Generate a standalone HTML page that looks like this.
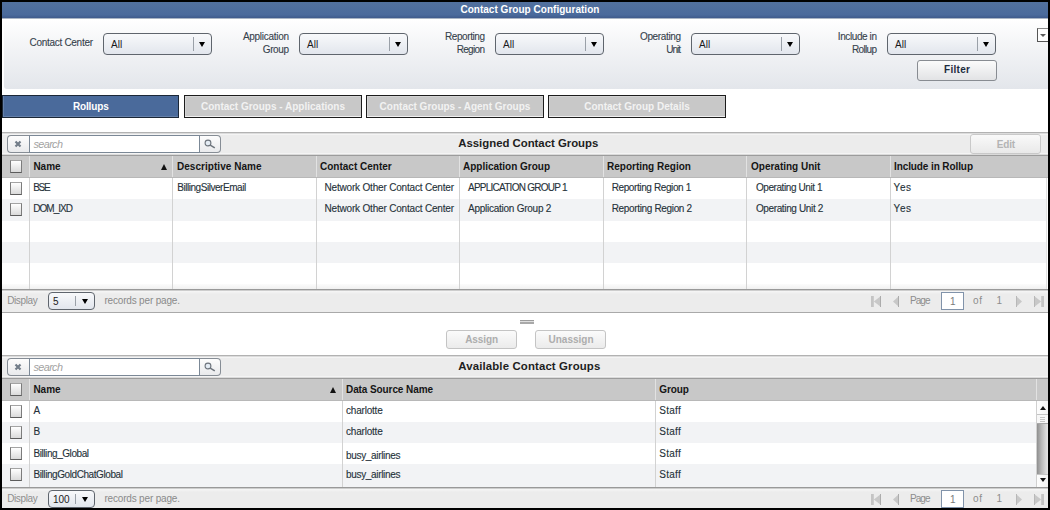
<!DOCTYPE html>
<html><head><meta charset="utf-8"><style>
html,body{margin:0;padding:0;width:1050px;height:510px;overflow:hidden;background:#000;font-family:'Liberation Sans', sans-serif;}
</style></head><body>
<div style="position:absolute;left:2px;top:2px;width:1046px;height:506px;background:#fff"></div>
<div style="position:absolute;left:2px;top:2px;width:1046px;height:16px;background:linear-gradient(#52719e,#4a6a9c 80%,#3f5b8c)"></div>
<div style="position:absolute;left:2px;top:18px;width:1046px;height:1px;background:#a9b4c4"></div>
<div style="position:absolute;left:4px;top:19px;width:1044px;height:70px;background:linear-gradient(#ffffff 0%,#f3f4f6 40%,#e3e6eb 100%);border-bottom-left-radius:3px"></div>
<div style="position:absolute;left:103px;top:33px;width:107px;height:20px;border:1px solid #5f656d;border-radius:4px;background:linear-gradient(#f8f9fb,#e2e6ed)"></div>
<div style="position:absolute;left:193px;top:37px;width:1px;height:14px;background:#9aa0a8"></div>
<div style="position:absolute;left:198.5px;top:42px;width:0;height:0;border-left:3.5px solid transparent;border-right:3.5px solid transparent;border-top:5px solid #000"></div>
<div style="position:absolute;left:299px;top:33px;width:107px;height:20px;border:1px solid #5f656d;border-radius:4px;background:linear-gradient(#f8f9fb,#e2e6ed)"></div>
<div style="position:absolute;left:389px;top:37px;width:1px;height:14px;background:#9aa0a8"></div>
<div style="position:absolute;left:394.5px;top:42px;width:0;height:0;border-left:3.5px solid transparent;border-right:3.5px solid transparent;border-top:5px solid #000"></div>
<div style="position:absolute;left:495px;top:33px;width:107px;height:20px;border:1px solid #5f656d;border-radius:4px;background:linear-gradient(#f8f9fb,#e2e6ed)"></div>
<div style="position:absolute;left:585px;top:37px;width:1px;height:14px;background:#9aa0a8"></div>
<div style="position:absolute;left:590.5px;top:42px;width:0;height:0;border-left:3.5px solid transparent;border-right:3.5px solid transparent;border-top:5px solid #000"></div>
<div style="position:absolute;left:691px;top:33px;width:107px;height:20px;border:1px solid #5f656d;border-radius:4px;background:linear-gradient(#f8f9fb,#e2e6ed)"></div>
<div style="position:absolute;left:781px;top:37px;width:1px;height:14px;background:#9aa0a8"></div>
<div style="position:absolute;left:786.5px;top:42px;width:0;height:0;border-left:3.5px solid transparent;border-right:3.5px solid transparent;border-top:5px solid #000"></div>
<div style="position:absolute;left:887px;top:33px;width:107px;height:20px;border:1px solid #5f656d;border-radius:4px;background:linear-gradient(#f8f9fb,#e2e6ed)"></div>
<div style="position:absolute;left:977px;top:37px;width:1px;height:14px;background:#9aa0a8"></div>
<div style="position:absolute;left:982.5px;top:42px;width:0;height:0;border-left:3.5px solid transparent;border-right:3.5px solid transparent;border-top:5px solid #000"></div>
<div style="position:absolute;left:1037px;top:28px;width:10px;height:12px;border:1px solid #555;border-top-color:#8a8a8a;border-right:none;background:#fdfdfd"></div>
<div style="position:absolute;left:1040px;top:34px;width:0;height:0;border-left:3.5px solid transparent;border-right:3.5px solid transparent;border-top:3.5px solid #5a5a5a"></div>
<div style="position:absolute;left:917px;top:60px;width:78px;height:19px;border:1px solid #888c92;border-radius:3px;background:linear-gradient(#fbfbfb,#e2e3e5)"></div>
<div style="position:absolute;left:2px;top:95px;width:175px;height:21px;background:#4a6a9b;border:1px solid #1b2737;box-shadow:inset 1px -1px 0 #6480aa"></div>
<div style="position:absolute;left:184px;top:95px;width:176px;height:21px;background:#c8c8c8;border:1px solid #1c1c1c;box-shadow:inset 0 -1px 0 #f0f0f0,inset 1px 1px 0 #d4d4d4"></div>
<div style="position:absolute;left:366px;top:95px;width:176px;height:21px;background:#c8c8c8;border:1px solid #1c1c1c;box-shadow:inset 0 -1px 0 #f0f0f0,inset 1px 1px 0 #d4d4d4"></div>
<div style="position:absolute;left:548px;top:95px;width:176px;height:21px;background:#c8c8c8;border:1px solid #1c1c1c;box-shadow:inset 0 -1px 0 #f0f0f0,inset 1px 1px 0 #d4d4d4"></div>
<div style="position:absolute;left:2px;top:132px;width:1046px;height:1px;background:#b2b2b2"></div>
<div style="position:absolute;left:2px;top:133px;width:1046px;height:22px;background:linear-gradient(#dcdcdc 0,#dcdcdc 1px,#f4f4f4 1px,#f4f4f4 2px,#ececec 2px,#ececec 20px,#f4f4f4 20px,#f4f4f4 21px,#dadada 21px)"></div>
<div style="position:absolute;left:7px;top:135px;width:21px;height:16px;border:1px solid #868d95;border-right:none;border-radius:4px 0 0 4px;background:linear-gradient(#fdfdfd,#e9eaec)"></div>
<svg style="position:absolute;left:14px;top:140px" width="8" height="8" viewBox="0 0 8 8"><path d="M1.5 1.5L6.5 6.5M6.5 1.5L1.5 6.5" stroke="#727d89" stroke-width="2.2"/></svg>
<div style="position:absolute;left:29px;top:135px;width:169px;height:16px;border:1px solid #7b8896;background:#fff"></div>
<div style="position:absolute;left:200px;top:135px;width:20px;height:16px;border:1px solid #868d95;border-left:none;border-radius:0 4px 4px 0;background:linear-gradient(#fdfdfd,#e9eaec)"></div>
<svg style="position:absolute;left:203px;top:138px" width="14" height="12" viewBox="0 0 14 12"><circle cx="5" cy="5" r="2.9" fill="#e4ecf4" stroke="#6c737b" stroke-width="1.1"/><line x1="7.2" y1="7.2" x2="11.8" y2="9.8" stroke="#6c737b" stroke-width="1.5"/></svg>
<div style="position:absolute;left:970px;top:134px;width:69px;height:18px;border:1px solid #c9c9c9;border-radius:3px;background:linear-gradient(#f9f9f9,#e9e9e9)"></div>
<div style="position:absolute;left:2px;top:155px;width:1046px;height:1px;background:#9c9c9c"></div>
<div style="position:absolute;left:2px;top:156px;width:1046px;height:22px;background:#c8c8c8"></div>
<div style="position:absolute;left:10px;top:160px;width:10px;height:11px;border:1px solid #7c7c7c;border-top-color:#a4a4a4;border-bottom-color:#5c5c5c;background:linear-gradient(#ffffff,#dadada)"></div>
<div style="position:absolute;left:29px;top:156px;width:1px;height:21px;background:#e2e2e2"></div>
<div style="position:absolute;left:172px;top:156px;width:1px;height:21px;background:#e2e2e2"></div>
<div style="position:absolute;left:316px;top:156px;width:1px;height:21px;background:#e2e2e2"></div>
<div style="position:absolute;left:459px;top:156px;width:1px;height:21px;background:#e2e2e2"></div>
<div style="position:absolute;left:603px;top:156px;width:1px;height:21px;background:#e2e2e2"></div>
<div style="position:absolute;left:746px;top:156px;width:1px;height:21px;background:#e2e2e2"></div>
<div style="position:absolute;left:890px;top:156px;width:1px;height:21px;background:#e2e2e2"></div>
<div style="position:absolute;left:2px;top:177px;width:1046px;height:1px;background:#b8b8b8"></div>
<div style="position:absolute;left:160.5px;top:164px;width:0;height:0;border-left:3px solid transparent;border-right:3px solid transparent;border-bottom:6px solid #111"></div>
<div style="position:absolute;left:2px;top:178px;width:1046px;height:21px;background:#ffffff"></div>
<div style="position:absolute;left:2px;top:199px;width:1046px;height:22px;background:#f2f3f5"></div>
<div style="position:absolute;left:2px;top:221px;width:1046px;height:21px;background:#ffffff"></div>
<div style="position:absolute;left:2px;top:242px;width:1046px;height:21px;background:#f2f3f5"></div>
<div style="position:absolute;left:2px;top:263px;width:1046px;height:26px;background:#ffffff"></div>
<div style="position:absolute;left:2px;top:284px;width:1046px;height:5px;background:linear-gradient(#fcfcfc,#f0f0f0)"></div>
<div style="position:absolute;left:29px;top:178px;width:1px;height:111px;background:#d2d2d2"></div>
<div style="position:absolute;left:172px;top:178px;width:1px;height:111px;background:#d2d2d2"></div>
<div style="position:absolute;left:316px;top:178px;width:1px;height:111px;background:#d2d2d2"></div>
<div style="position:absolute;left:459px;top:178px;width:1px;height:111px;background:#d2d2d2"></div>
<div style="position:absolute;left:603px;top:178px;width:1px;height:111px;background:#d2d2d2"></div>
<div style="position:absolute;left:746px;top:178px;width:1px;height:111px;background:#d2d2d2"></div>
<div style="position:absolute;left:890px;top:178px;width:1px;height:111px;background:#d2d2d2"></div>
<div style="position:absolute;left:1046px;top:178px;width:2px;height:111px;background:#fff;border-left:1px solid #e2e2e2"></div>
<div style="position:absolute;left:10px;top:182px;width:10px;height:11px;border:1px solid #7c7c7c;border-top-color:#a4a4a4;border-bottom-color:#5c5c5c;background:linear-gradient(#ffffff,#dadada)"></div>
<div style="position:absolute;left:10px;top:203px;width:10px;height:11px;border:1px solid #7c7c7c;border-top-color:#a4a4a4;border-bottom-color:#5c5c5c;background:linear-gradient(#ffffff,#dadada)"></div>
<div style="position:absolute;left:2px;top:289px;width:1046px;height:1px;background:#999999"></div>
<div style="position:absolute;left:2px;top:290px;width:1046px;height:1px;background:#cdcdcd"></div>
<div style="position:absolute;left:2px;top:291px;width:1046px;height:21px;background:linear-gradient(#f6f6f6,#ececec 3px,#ececec)"></div>
<div style="position:absolute;left:2px;top:312px;width:1046px;height:1px;background:#a9a9a9"></div>
<div style="position:absolute;left:48px;top:292px;width:45px;height:16px;border:1px solid #5f656d;border-radius:4px;background:linear-gradient(#f8f9fb,#e2e6ed)"></div>
<div style="position:absolute;left:75px;top:296px;width:1px;height:10px;background:#9aa0a8"></div>
<div style="position:absolute;left:81.5px;top:299px;width:0;height:0;border-left:3.5px solid transparent;border-right:3.5px solid transparent;border-top:5px solid #000"></div>
<svg style="position:absolute;left:870px;top:296px" width="12" height="11" viewBox="0 0 12 11"><rect x="1" y="0" width="2.8" height="11" fill="#c4c4c4"/><polygon points="11,0 11,11 3.8,5.5" fill="#c8c8c8"/><rect x="10" y="0" width="1" height="11" fill="#acacac"/></svg>
<svg style="position:absolute;left:892px;top:296px" width="8" height="11" viewBox="0 0 8 11"><polygon points="7,0 7,11 1,5.5" fill="#c8c8c8"/><rect x="6" y="0" width="1" height="11" fill="#acacac"/></svg>
<div style="position:absolute;left:941px;top:292px;width:21px;height:16px;border:1px solid #8193aa;background:#fff"></div>
<svg style="position:absolute;left:1015px;top:296px" width="8" height="11" viewBox="0 0 8 11"><polygon points="1,0 1,11 7,5.5" fill="#c8c8c8"/><rect x="1" y="0" width="1" height="11" fill="#b8b8b8"/></svg>
<svg style="position:absolute;left:1033px;top:296px" width="12" height="11" viewBox="0 0 12 11"><polygon points="1,0 1,11 8.2,5.5" fill="#c8c8c8"/><rect x="1" y="0" width="1" height="11" fill="#b8b8b8"/><rect x="8.2" y="0" width="2.8" height="11" fill="#c4c4c4"/></svg>
<div style="position:absolute;left:520px;top:320px;width:14px;height:1px;background:#9c9c9c"></div>
<div style="position:absolute;left:520px;top:321px;width:14px;height:1px;background:#dedede"></div>
<div style="position:absolute;left:520px;top:322px;width:14px;height:2px;background:#a9a9a9"></div>
<div style="position:absolute;left:446px;top:330px;width:69px;height:17px;border:1px solid #c4c4c4;border-radius:3px;background:linear-gradient(#fbfbfb,#ebebeb)"></div>
<div style="position:absolute;left:535px;top:330px;width:69px;height:17px;border:1px solid #c4c4c4;border-radius:3px;background:linear-gradient(#fbfbfb,#ebebeb)"></div>
<div style="position:absolute;left:2px;top:355px;width:1046px;height:1px;background:#b2b2b2"></div>
<div style="position:absolute;left:2px;top:356px;width:1046px;height:22px;background:linear-gradient(#dcdcdc 0,#dcdcdc 1px,#f4f4f4 1px,#f4f4f4 2px,#ececec 2px,#ececec 20px,#f4f4f4 20px,#f4f4f4 21px,#dadada 21px)"></div>
<div style="position:absolute;left:7px;top:358px;width:21px;height:16px;border:1px solid #868d95;border-right:none;border-radius:4px 0 0 4px;background:linear-gradient(#fdfdfd,#e9eaec)"></div>
<svg style="position:absolute;left:14px;top:363px" width="8" height="8" viewBox="0 0 8 8"><path d="M1.5 1.5L6.5 6.5M6.5 1.5L1.5 6.5" stroke="#727d89" stroke-width="2.2"/></svg>
<div style="position:absolute;left:29px;top:358px;width:169px;height:16px;border:1px solid #7b8896;background:#fff"></div>
<div style="position:absolute;left:200px;top:358px;width:20px;height:16px;border:1px solid #868d95;border-left:none;border-radius:0 4px 4px 0;background:linear-gradient(#fdfdfd,#e9eaec)"></div>
<svg style="position:absolute;left:203px;top:361px" width="14" height="12" viewBox="0 0 14 12"><circle cx="5" cy="5" r="2.9" fill="#e4ecf4" stroke="#6c737b" stroke-width="1.1"/><line x1="7.2" y1="7.2" x2="11.8" y2="9.8" stroke="#6c737b" stroke-width="1.5"/></svg>
<div style="position:absolute;left:2px;top:378px;width:1046px;height:1px;background:#9c9c9c"></div>
<div style="position:absolute;left:2px;top:379px;width:1046px;height:22px;background:#c8c8c8"></div>
<div style="position:absolute;left:10px;top:383px;width:10px;height:11px;border:1px solid #7c7c7c;border-top-color:#a4a4a4;border-bottom-color:#5c5c5c;background:linear-gradient(#ffffff,#dadada)"></div>
<div style="position:absolute;left:29px;top:379px;width:1px;height:21px;background:#e2e2e2"></div>
<div style="position:absolute;left:342px;top:379px;width:1px;height:21px;background:#e2e2e2"></div>
<div style="position:absolute;left:655px;top:379px;width:1px;height:21px;background:#e2e2e2"></div>
<div style="position:absolute;left:1036px;top:379px;width:1px;height:21px;background:#e2e2e2"></div>
<div style="position:absolute;left:2px;top:400px;width:1046px;height:1px;background:#b8b8b8"></div>
<div style="position:absolute;left:329.5px;top:387px;width:0;height:0;border-left:3px solid transparent;border-right:3px solid transparent;border-bottom:6px solid #111"></div>
<div style="position:absolute;left:2px;top:401px;width:1034px;height:21px;background:#ffffff"></div>
<div style="position:absolute;left:2px;top:422px;width:1034px;height:21px;background:#f2f3f5"></div>
<div style="position:absolute;left:2px;top:443px;width:1034px;height:21px;background:#ffffff"></div>
<div style="position:absolute;left:2px;top:464px;width:1034px;height:23px;background:#f2f3f5"></div>
<div style="position:absolute;left:29px;top:401px;width:1px;height:86px;background:#d2d2d2"></div>
<div style="position:absolute;left:342px;top:401px;width:1px;height:86px;background:#d2d2d2"></div>
<div style="position:absolute;left:655px;top:401px;width:1px;height:86px;background:#d2d2d2"></div>
<div style="position:absolute;left:10px;top:405px;width:10px;height:11px;border:1px solid #7c7c7c;border-top-color:#a4a4a4;border-bottom-color:#5c5c5c;background:linear-gradient(#ffffff,#dadada)"></div>
<div style="position:absolute;left:10px;top:426px;width:10px;height:11px;border:1px solid #7c7c7c;border-top-color:#a4a4a4;border-bottom-color:#5c5c5c;background:linear-gradient(#ffffff,#dadada)"></div>
<div style="position:absolute;left:10px;top:447px;width:10px;height:11px;border:1px solid #7c7c7c;border-top-color:#a4a4a4;border-bottom-color:#5c5c5c;background:linear-gradient(#ffffff,#dadada)"></div>
<div style="position:absolute;left:10px;top:468px;width:10px;height:11px;border:1px solid #7c7c7c;border-top-color:#a4a4a4;border-bottom-color:#5c5c5c;background:linear-gradient(#ffffff,#dadada)"></div>
<div style="position:absolute;left:1036px;top:401px;width:11px;height:86px;background:#f0f0f0;border-left:1px solid #d0d0d0"></div>
<div style="position:absolute;left:1037px;top:401px;width:11px;height:13px;background:linear-gradient(90deg,#fdfdfd,#f2f2f2);border-bottom:1px solid #c4c4c4"></div>
<div style="position:absolute;left:1040px;top:406px;width:0;height:0;border-left:3px solid transparent;border-right:3px solid transparent;border-bottom:4px solid #111"></div>
<div style="position:absolute;left:1037px;top:415px;width:11px;height:8px;background:#f7f7f7;border-bottom:1px solid #a8a8a8"></div>
<div style="position:absolute;left:1040px;top:417px;width:5px;height:1px;background:#c4c4c4"></div>
<div style="position:absolute;left:1040px;top:419px;width:5px;height:1px;background:#c4c4c4"></div>
<div style="position:absolute;left:1040px;top:421px;width:5px;height:1px;background:#c4c4c4"></div>
<div style="position:absolute;left:1037px;top:424px;width:11px;height:50px;background:linear-gradient(90deg,#8f8f8f,#b8b8b8 40%,#d8d8d8 80%,#e4e4e4)"></div>
<div style="position:absolute;left:1037px;top:474px;width:11px;height:13px;background:linear-gradient(90deg,#fdfdfd,#f2f2f2);border-top:1px solid #c4c4c4"></div>
<div style="position:absolute;left:1040px;top:478px;width:0;height:0;border-left:3px solid transparent;border-right:3px solid transparent;border-top:4px solid #111"></div>
<div style="position:absolute;left:2px;top:487px;width:1046px;height:1px;background:#999999"></div>
<div style="position:absolute;left:2px;top:488px;width:1046px;height:1px;background:#cdcdcd"></div>
<div style="position:absolute;left:2px;top:489px;width:1046px;height:21px;background:linear-gradient(#f6f6f6,#ececec 3px,#ececec)"></div>
<div style="position:absolute;left:48px;top:490px;width:45px;height:16px;border:1px solid #5f656d;border-radius:4px;background:linear-gradient(#f8f9fb,#e2e6ed)"></div>
<div style="position:absolute;left:75px;top:494px;width:1px;height:10px;background:#9aa0a8"></div>
<div style="position:absolute;left:81.5px;top:497px;width:0;height:0;border-left:3.5px solid transparent;border-right:3.5px solid transparent;border-top:5px solid #000"></div>
<svg style="position:absolute;left:870px;top:494px" width="12" height="11" viewBox="0 0 12 11"><rect x="1" y="0" width="2.8" height="11" fill="#c4c4c4"/><polygon points="11,0 11,11 3.8,5.5" fill="#c8c8c8"/><rect x="10" y="0" width="1" height="11" fill="#acacac"/></svg>
<svg style="position:absolute;left:892px;top:494px" width="8" height="11" viewBox="0 0 8 11"><polygon points="7,0 7,11 1,5.5" fill="#c8c8c8"/><rect x="6" y="0" width="1" height="11" fill="#acacac"/></svg>
<div style="position:absolute;left:941px;top:490px;width:21px;height:16px;border:1px solid #8193aa;background:#fff"></div>
<svg style="position:absolute;left:1015px;top:494px" width="8" height="11" viewBox="0 0 8 11"><polygon points="1,0 1,11 7,5.5" fill="#c8c8c8"/><rect x="1" y="0" width="1" height="11" fill="#b8b8b8"/></svg>
<svg style="position:absolute;left:1033px;top:494px" width="12" height="11" viewBox="0 0 12 11"><polygon points="1,0 1,11 8.2,5.5" fill="#c8c8c8"/><rect x="1" y="0" width="1" height="11" fill="#b8b8b8"/><rect x="8.2" y="0" width="2.8" height="11" fill="#c4c4c4"/></svg>
<div style="position:absolute;left:460.40px;top:4.10px;font-size:10px;font-weight:bold;font-style:normal;color:#fff;letter-spacing:0.026px;white-space:nowrap;">Contact Group Configuration</div>
<div style="position:absolute;left:111.00px;top:38.80px;font-size:10px;font-weight:normal;font-style:normal;color:#1a1a1a;letter-spacing:0.000px;white-space:nowrap;">All</div>
<div style="position:absolute;left:29.50px;top:36.80px;font-size:10px;font-weight:normal;font-style:normal;color:#36424c;letter-spacing:-0.290px;white-space:nowrap;-webkit-text-stroke:0.1px #36424c">Contact Center</div>
<div style="position:absolute;left:307.00px;top:38.80px;font-size:10px;font-weight:normal;font-style:normal;color:#1a1a1a;letter-spacing:0.000px;white-space:nowrap;">All</div>
<div style="position:absolute;left:242.90px;top:30.80px;font-size:10px;font-weight:normal;font-style:normal;color:#36424c;letter-spacing:-0.282px;white-space:nowrap;-webkit-text-stroke:0.1px #36424c">Application</div>
<div style="position:absolute;left:262.80px;top:43.80px;font-size:10px;font-weight:normal;font-style:normal;color:#36424c;letter-spacing:-0.399px;white-space:nowrap;-webkit-text-stroke:0.1px #36424c">Group</div>
<div style="position:absolute;left:503.00px;top:38.80px;font-size:10px;font-weight:normal;font-style:normal;color:#1a1a1a;letter-spacing:0.000px;white-space:nowrap;">All</div>
<div style="position:absolute;left:445.00px;top:30.80px;font-size:10px;font-weight:normal;font-style:normal;color:#36424c;letter-spacing:-0.420px;white-space:nowrap;-webkit-text-stroke:0.1px #36424c">Reporting</div>
<div style="position:absolute;left:456.70px;top:43.80px;font-size:10px;font-weight:normal;font-style:normal;color:#36424c;letter-spacing:-0.681px;white-space:nowrap;-webkit-text-stroke:0.1px #36424c">Region</div>
<div style="position:absolute;left:699.00px;top:38.80px;font-size:10px;font-weight:normal;font-style:normal;color:#1a1a1a;letter-spacing:0.000px;white-space:nowrap;">All</div>
<div style="position:absolute;left:640.00px;top:30.80px;font-size:10px;font-weight:normal;font-style:normal;color:#36424c;letter-spacing:-0.365px;white-space:nowrap;-webkit-text-stroke:0.1px #36424c">Operating</div>
<div style="position:absolute;left:666.20px;top:43.80px;font-size:10px;font-weight:normal;font-style:normal;color:#36424c;letter-spacing:-0.999px;white-space:nowrap;-webkit-text-stroke:0.1px #36424c">Unit</div>
<div style="position:absolute;left:895.00px;top:38.80px;font-size:10px;font-weight:normal;font-style:normal;color:#1a1a1a;letter-spacing:0.000px;white-space:nowrap;">All</div>
<div style="position:absolute;left:837.80px;top:30.80px;font-size:10px;font-weight:normal;font-style:normal;color:#36424c;letter-spacing:-0.401px;white-space:nowrap;-webkit-text-stroke:0.1px #36424c">Include in</div>
<div style="position:absolute;left:852.00px;top:43.80px;font-size:10px;font-weight:normal;font-style:normal;color:#36424c;letter-spacing:-0.672px;white-space:nowrap;-webkit-text-stroke:0.1px #36424c">Rollup</div>
<div style="position:absolute;left:944.00px;top:64.30px;font-size:10px;font-weight:bold;font-style:normal;color:#1c2b40;letter-spacing:0.309px;white-space:nowrap;">Filter</div>
<div style="position:absolute;left:73.00px;top:101.20px;font-size:10px;font-weight:bold;font-style:normal;color:#fff;letter-spacing:-0.162px;white-space:nowrap;">Rollups</div>
<div style="position:absolute;left:200.96px;top:101.20px;font-size:10px;font-weight:bold;font-style:normal;color:#f2f2f2;letter-spacing:0.000px;white-space:nowrap;">Contact Groups - Applications</div>
<div style="position:absolute;left:379.62px;top:101.20px;font-size:10px;font-weight:bold;font-style:normal;color:#f2f2f2;letter-spacing:0.000px;white-space:nowrap;">Contact Groups - Agent Groups</div>
<div style="position:absolute;left:584.21px;top:101.20px;font-size:10px;font-weight:bold;font-style:normal;color:#f2f2f2;letter-spacing:0.000px;white-space:nowrap;">Contact Group Details</div>
<div style="position:absolute;left:33.60px;top:138.06px;font-size:10.8px;font-weight:normal;font-style:italic;color:#a2a2a2;letter-spacing:-0.624px;white-space:nowrap;">search</div>
<div style="position:absolute;left:458.30px;top:136.51px;font-size:11.4px;font-weight:bold;font-style:normal;color:#1e1e1e;letter-spacing:-0.023px;white-space:nowrap;">Assigned Contact Groups</div>
<div style="position:absolute;left:996.70px;top:138.80px;font-size:10px;font-weight:bold;font-style:normal;color:#b4b4b4;letter-spacing:-0.130px;white-space:nowrap;">Edit</div>
<div style="position:absolute;left:33.40px;top:161.30px;font-size:10px;font-weight:bold;font-style:normal;color:#151515;letter-spacing:0.000px;white-space:nowrap;">Name</div>
<div style="position:absolute;left:177.00px;top:161.30px;font-size:10px;font-weight:bold;font-style:normal;color:#151515;letter-spacing:0.037px;white-space:nowrap;">Descriptive Name</div>
<div style="position:absolute;left:320.00px;top:161.30px;font-size:10px;font-weight:bold;font-style:normal;color:#151515;letter-spacing:0.000px;white-space:nowrap;">Contact Center</div>
<div style="position:absolute;left:463.00px;top:161.30px;font-size:10px;font-weight:bold;font-style:normal;color:#151515;letter-spacing:-0.014px;white-space:nowrap;">Application Group</div>
<div style="position:absolute;left:607.00px;top:161.30px;font-size:10px;font-weight:bold;font-style:normal;color:#151515;letter-spacing:0.000px;white-space:nowrap;">Reporting Region</div>
<div style="position:absolute;left:751.00px;top:161.30px;font-size:10px;font-weight:bold;font-style:normal;color:#151515;letter-spacing:0.000px;white-space:nowrap;">Operating Unit</div>
<div style="position:absolute;left:894.00px;top:161.30px;font-size:10px;font-weight:bold;font-style:normal;color:#151515;letter-spacing:-0.098px;white-space:nowrap;">Include in Rollup</div>
<div style="position:absolute;left:33.30px;top:181.80px;font-size:10px;font-weight:normal;font-style:normal;color:#26323a;letter-spacing:-1.358px;white-space:nowrap;-webkit-text-stroke:0.12px #26323a">BSE</div>
<div style="position:absolute;left:177.20px;top:181.80px;font-size:10px;font-weight:normal;font-style:normal;color:#26323a;letter-spacing:-0.453px;white-space:nowrap;-webkit-text-stroke:0.12px #26323a">BillingSilverEmail</div>
<div style="position:absolute;left:324.50px;top:181.80px;font-size:10px;font-weight:normal;font-style:normal;color:#26323a;letter-spacing:-0.185px;white-space:nowrap;-webkit-text-stroke:0.12px #26323a">Network Other Contact Center</div>
<div style="position:absolute;left:468.00px;top:181.80px;font-size:10px;font-weight:normal;font-style:normal;color:#26323a;letter-spacing:-0.750px;white-space:nowrap;-webkit-text-stroke:0.12px #26323a">APPLICATION GROUP 1</div>
<div style="position:absolute;left:611.70px;top:181.80px;font-size:10px;font-weight:normal;font-style:normal;color:#26323a;letter-spacing:-0.392px;white-space:nowrap;-webkit-text-stroke:0.12px #26323a">Reporting Region 1</div>
<div style="position:absolute;left:755.90px;top:181.80px;font-size:10px;font-weight:normal;font-style:normal;color:#26323a;letter-spacing:-0.415px;white-space:nowrap;-webkit-text-stroke:0.12px #26323a">Operating Unit 1</div>
<div style="position:absolute;left:893.50px;top:181.80px;font-size:10px;font-weight:normal;font-style:normal;color:#26323a;letter-spacing:0.636px;white-space:nowrap;-webkit-text-stroke:0.12px #26323a">Yes</div>
<div style="position:absolute;left:33.30px;top:203.30px;font-size:10px;font-weight:normal;font-style:normal;color:#26323a;letter-spacing:-0.994px;white-space:nowrap;-webkit-text-stroke:0.12px #26323a">DOM_IXD</div>
<div style="position:absolute;left:324.50px;top:203.30px;font-size:10px;font-weight:normal;font-style:normal;color:#26323a;letter-spacing:-0.185px;white-space:nowrap;-webkit-text-stroke:0.12px #26323a">Network Other Contact Center</div>
<div style="position:absolute;left:468.00px;top:203.30px;font-size:10px;font-weight:normal;font-style:normal;color:#26323a;letter-spacing:-0.252px;white-space:nowrap;-webkit-text-stroke:0.12px #26323a">Application Group 2</div>
<div style="position:absolute;left:611.70px;top:203.30px;font-size:10px;font-weight:normal;font-style:normal;color:#26323a;letter-spacing:-0.340px;white-space:nowrap;-webkit-text-stroke:0.12px #26323a">Reporting Region 2</div>
<div style="position:absolute;left:755.90px;top:203.30px;font-size:10px;font-weight:normal;font-style:normal;color:#26323a;letter-spacing:-0.362px;white-space:nowrap;-webkit-text-stroke:0.12px #26323a">Operating Unit 2</div>
<div style="position:absolute;left:893.50px;top:203.30px;font-size:10px;font-weight:normal;font-style:normal;color:#26323a;letter-spacing:0.636px;white-space:nowrap;-webkit-text-stroke:0.12px #26323a">Yes</div>
<div style="position:absolute;left:7.20px;top:294.80px;font-size:10px;font-weight:normal;font-style:normal;color:#8e8e8e;letter-spacing:-0.383px;white-space:nowrap;">Display</div>
<div style="position:absolute;left:53.00px;top:295.80px;font-size:10px;font-weight:normal;font-style:normal;color:#1a1a1a;letter-spacing:0.000px;white-space:nowrap;">5</div>
<div style="position:absolute;left:104.40px;top:294.80px;font-size:10px;font-weight:normal;font-style:normal;color:#8a8a8a;letter-spacing:-0.174px;white-space:nowrap;">records per page.</div>
<div style="position:absolute;left:910.00px;top:294.80px;font-size:10px;font-weight:normal;font-style:normal;color:#8d8d8d;letter-spacing:-0.953px;white-space:nowrap;">Page</div>
<div style="position:absolute;left:950.00px;top:295.80px;font-size:10px;font-weight:normal;font-style:normal;color:#7a7a7a;letter-spacing:0.000px;white-space:nowrap;">1</div>
<div style="position:absolute;left:973.00px;top:294.80px;font-size:10px;font-weight:normal;font-style:normal;color:#8d8d8d;letter-spacing:0.656px;white-space:nowrap;">of</div>
<div style="position:absolute;left:996.60px;top:294.80px;font-size:10px;font-weight:normal;font-style:normal;color:#8d8d8d;letter-spacing:0.000px;white-space:nowrap;">1</div>
<div style="position:absolute;left:465.20px;top:334.30px;font-size:10px;font-weight:bold;font-style:normal;color:#adadad;letter-spacing:-0.069px;white-space:nowrap;">Assign</div>
<div style="position:absolute;left:548.50px;top:334.30px;font-size:10px;font-weight:bold;font-style:normal;color:#adadad;letter-spacing:-0.002px;white-space:nowrap;">Unassign</div>
<div style="position:absolute;left:33.60px;top:361.06px;font-size:10.8px;font-weight:normal;font-style:italic;color:#a2a2a2;letter-spacing:-0.624px;white-space:nowrap;">search</div>
<div style="position:absolute;left:458.30px;top:359.51px;font-size:11.4px;font-weight:bold;font-style:normal;color:#1e1e1e;letter-spacing:0.138px;white-space:nowrap;">Available Contact Groups</div>
<div style="position:absolute;left:33.40px;top:384.30px;font-size:10px;font-weight:bold;font-style:normal;color:#151515;letter-spacing:0.000px;white-space:nowrap;">Name</div>
<div style="position:absolute;left:346.00px;top:384.30px;font-size:10px;font-weight:bold;font-style:normal;color:#151515;letter-spacing:-0.092px;white-space:nowrap;">Data Source Name</div>
<div style="position:absolute;left:659.30px;top:384.30px;font-size:10px;font-weight:bold;font-style:normal;color:#151515;letter-spacing:-0.125px;white-space:nowrap;">Group</div>
<div style="position:absolute;left:33.50px;top:404.80px;font-size:10px;font-weight:normal;font-style:normal;color:#26323a;letter-spacing:0.000px;white-space:nowrap;-webkit-text-stroke:0.12px #26323a">A</div>
<div style="position:absolute;left:346.00px;top:404.80px;font-size:10px;font-weight:normal;font-style:normal;color:#26323a;letter-spacing:-0.207px;white-space:nowrap;-webkit-text-stroke:0.12px #26323a">charlotte</div>
<div style="position:absolute;left:659.30px;top:404.80px;font-size:10px;font-weight:normal;font-style:normal;color:#26323a;letter-spacing:0.252px;white-space:nowrap;-webkit-text-stroke:0.12px #26323a">Staff</div>
<div style="position:absolute;left:33.50px;top:426.30px;font-size:10px;font-weight:normal;font-style:normal;color:#26323a;letter-spacing:0.000px;white-space:nowrap;-webkit-text-stroke:0.12px #26323a">B</div>
<div style="position:absolute;left:346.00px;top:426.30px;font-size:10px;font-weight:normal;font-style:normal;color:#26323a;letter-spacing:-0.207px;white-space:nowrap;-webkit-text-stroke:0.12px #26323a">charlotte</div>
<div style="position:absolute;left:659.30px;top:426.30px;font-size:10px;font-weight:normal;font-style:normal;color:#26323a;letter-spacing:0.252px;white-space:nowrap;-webkit-text-stroke:0.12px #26323a">Staff</div>
<div style="position:absolute;left:33.50px;top:447.80px;font-size:10px;font-weight:normal;font-style:normal;color:#26323a;letter-spacing:-0.435px;white-space:nowrap;-webkit-text-stroke:0.12px #26323a">Billing_Global</div>
<div style="position:absolute;left:346.00px;top:449.80px;font-size:10px;font-weight:normal;font-style:normal;color:#26323a;letter-spacing:-0.331px;white-space:nowrap;-webkit-text-stroke:0.12px #26323a">busy_airlines</div>
<div style="position:absolute;left:659.30px;top:447.80px;font-size:10px;font-weight:normal;font-style:normal;color:#26323a;letter-spacing:0.252px;white-space:nowrap;-webkit-text-stroke:0.12px #26323a">Staff</div>
<div style="position:absolute;left:33.50px;top:468.80px;font-size:10px;font-weight:normal;font-style:normal;color:#26323a;letter-spacing:-0.422px;white-space:nowrap;-webkit-text-stroke:0.12px #26323a">BillingGoldChatGlobal</div>
<div style="position:absolute;left:346.00px;top:468.80px;font-size:10px;font-weight:normal;font-style:normal;color:#26323a;letter-spacing:-0.331px;white-space:nowrap;-webkit-text-stroke:0.12px #26323a">busy_airlines</div>
<div style="position:absolute;left:659.30px;top:468.80px;font-size:10px;font-weight:normal;font-style:normal;color:#26323a;letter-spacing:0.252px;white-space:nowrap;-webkit-text-stroke:0.12px #26323a">Staff</div>
<div style="position:absolute;left:7.20px;top:492.80px;font-size:10px;font-weight:normal;font-style:normal;color:#8e8e8e;letter-spacing:-0.383px;white-space:nowrap;">Display</div>
<div style="position:absolute;left:53.00px;top:493.80px;font-size:10px;font-weight:normal;font-style:normal;color:#1a1a1a;letter-spacing:0.000px;white-space:nowrap;">100</div>
<div style="position:absolute;left:104.40px;top:492.80px;font-size:10px;font-weight:normal;font-style:normal;color:#8a8a8a;letter-spacing:-0.174px;white-space:nowrap;">records per page.</div>
<div style="position:absolute;left:910.00px;top:492.80px;font-size:10px;font-weight:normal;font-style:normal;color:#8d8d8d;letter-spacing:-0.953px;white-space:nowrap;">Page</div>
<div style="position:absolute;left:950.00px;top:493.80px;font-size:10px;font-weight:normal;font-style:normal;color:#7a7a7a;letter-spacing:0.000px;white-space:nowrap;">1</div>
<div style="position:absolute;left:973.00px;top:492.80px;font-size:10px;font-weight:normal;font-style:normal;color:#8d8d8d;letter-spacing:0.656px;white-space:nowrap;">of</div>
<div style="position:absolute;left:996.60px;top:492.80px;font-size:10px;font-weight:normal;font-style:normal;color:#8d8d8d;letter-spacing:0.000px;white-space:nowrap;">1</div>
<div style="position:absolute;left:0px;top:0px;width:1050px;height:2px;background:#000"></div>
<div style="position:absolute;left:0px;top:508px;width:1050px;height:2px;background:#000"></div>
<div style="position:absolute;left:0px;top:0px;width:2px;height:510px;background:#000"></div>
<div style="position:absolute;left:1048px;top:0px;width:2px;height:510px;background:#000"></div>
</body></html>
